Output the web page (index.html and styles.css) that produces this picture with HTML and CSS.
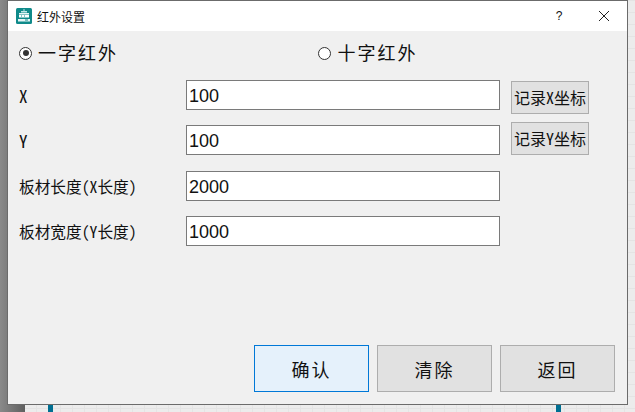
FILE: index.html
```html
<!DOCTYPE html>
<html lang="zh">
<head>
<meta charset="utf-8">
<title>红外设置</title>
<link rel="stylesheet" href="styles.css">
</head>
<body>
<div class="desk">
  <div class="desk-left"></div>
  <div class="post post-a"></div>
  <div class="post post-b"></div>
  <div class="dialog">
    <header class="titlebar">
      <svg class="app-icon" width="16" height="16" viewBox="0 0 16 16">
        <rect width="16" height="16" rx="1.5" fill="#0f8a8a"/>
        <rect x="7" y="1.5" width="2" height="1" fill="#bfe6e6"/>
        <rect x="5" y="3" width="6" height="1.5" fill="#bfe6e6"/>
        <rect x="3" y="5" width="10" height="1" fill="#e6f5f5"/>
        <rect x="3" y="6.5" width="10" height="3" fill="#ffffff"/>
        <rect x="5" y="7.5" width="1" height="1" fill="#0f8a8a"/>
        <rect x="8" y="7.5" width="1" height="1" fill="#0f8a8a"/>
        <rect x="2" y="11" width="12" height="2.5" fill="#e6f5f5"/>
        <rect x="9" y="11.5" width="3" height="1" fill="#0f8a8a"/>
      </svg>
      <span class="title">红外设置</span>
      <span class="help">?</span>
      <svg class="close" width="12" height="12" viewBox="0 0 12 12">
        <path d="M1 1L11 11M11 1L1 11" stroke="#222" stroke-width="1" fill="none"/>
      </svg>
    </header>
    <main class="body">
      <div class="radios">
        <label class="radio"><span class="dot dot-on"></span><span class="radio-text">一字红外</span></label>
        <label class="radio radio-b"><span class="dot"></span><span class="radio-text">十字红外</span></label>
      </div>
      <div class="form">
        <div class="row">
          <span class="label label-big">X</span>
          <input class="field" value="100">
          <button class="side side-x">记录X坐标</button>
        </div>
        <div class="row">
          <span class="label label-big">Y</span>
          <input class="field" value="100">
          <button class="side side-y">记录Y坐标</button>
        </div>
        <div class="row row-wide">
          <span class="label">板材长度(X长度)</span>
          <input class="field" value="2000">
        </div>
        <div class="row">
          <span class="label">板材宽度(Y长度)</span>
          <input class="field" value="1000">
        </div>
      </div>
      <div class="actions">
        <button class="action action-primary">确认</button>
        <button class="action">清除</button>
        <button class="action">返回</button>
      </div>
    </main>
  </div>
</div>
</body>
</html>
```
FILE: styles.css
```css
* { box-sizing: border-box; }
html, body { margin: 0; padding: 0; }
body { width: 635px; height: 412px; overflow: hidden; font-family: "Liberation Sans", "Noto Sans CJK SC", sans-serif; color: #111; }
.desk { position: relative; width: 635px; height: 412px; background-color: #ececec; background-image: repeating-linear-gradient(to right, #e4e4e4 0 1px, transparent 1px 12px), repeating-linear-gradient(to bottom, #e4e4e4 0 1px, transparent 1px 12px); padding: 0 0 0 7px; overflow: hidden; }
.desk-left { position: absolute; left: 0; top: 0; bottom: 0; width: 25px; background: linear-gradient(to right, #8a8a8a, #5f5f5f); }
.post { position: absolute; top: 400px; bottom: 0; width: 5px; background: #006f92; }
.post-a { left: 48px; }
.post-b { left: 556px; }
.dialog { position: relative; z-index: 2; width: 621px; height: 405px; border: 1px solid #6b6b6b; background: #f0f0f0; display: flex; flex-direction: column; }
.titlebar { height: 30px; background: #fff; display: flex; align-items: center; padding-left: 8px; flex: none; }
.app-icon { flex: none; }
.title { font-size: 12px; margin-left: 5px; color: #111; }
.help { margin-left: auto; font-size: 12px; width: 12px; text-align: center; }
.close { margin: 0 17px 0 33px; }
.body { flex: 1; display: flex; flex-direction: column; padding: 0 11px 12px 11px; }
.radios { display: flex; height: 44px; align-items: center; flex: none; }
.radio { display: flex; align-items: center; width: 299px; }
.dot { width: 13px; height: 13px; border: 1px solid #333; border-radius: 50%; background: #fff; flex: none; position: relative; }
.dot-on::after { content: ""; position: absolute; left: 2.5px; top: 2.5px; width: 6px; height: 6px; border-radius: 50%; background: #333; }
.radio-text { font-size: 18px; letter-spacing: 2px; margin: 0 0 2px 6px; }
.radio-b .radio-text { margin-left: 7px; }
.form { display: flex; flex-direction: column; gap: 15px; margin-top: 5px; }
.row { display: flex; align-items: center; height: 30px; }
.row-wide { margin-top: 1px; }
.label { width: 167px; flex: none; font-size: 15.7px; font-family: "Noto Sans Mono CJK SC", "Noto Sans CJK SC", monospace; }
.label-big { font-size: 17px; }
.field { width: 314px; height: 30px; border: 1px solid #7a7a7a; background: #fff; font: 18px "Liberation Sans", sans-serif; padding: 2px 2px 0; color: #111; flex: none; outline: none; }
.side { width: 78px; height: 33px; margin-left: 11px; border: 1px solid #adadad; background: #e1e1e1; font: 16px "Noto Sans Mono CJK SC", "Noto Sans CJK SC", monospace; color: #111; padding: 0 0 2px; flex: none; }
.side-x { align-self: flex-start; margin-top: 1px; }
.side-y { align-self: flex-end; }
.actions { margin-top: auto; display: flex; justify-content: flex-end; gap: 8px; padding-right: 1px; }
.action { width: 115px; height: 47px; border: 1px solid #adadad; background: #e1e1e1; font: 18px "Liberation Sans", "Noto Sans CJK SC", sans-serif; letter-spacing: 2px; color: #111; padding: 0; }
.action-primary { border-color: #0078d7; background: #e5f1fb; }
```
